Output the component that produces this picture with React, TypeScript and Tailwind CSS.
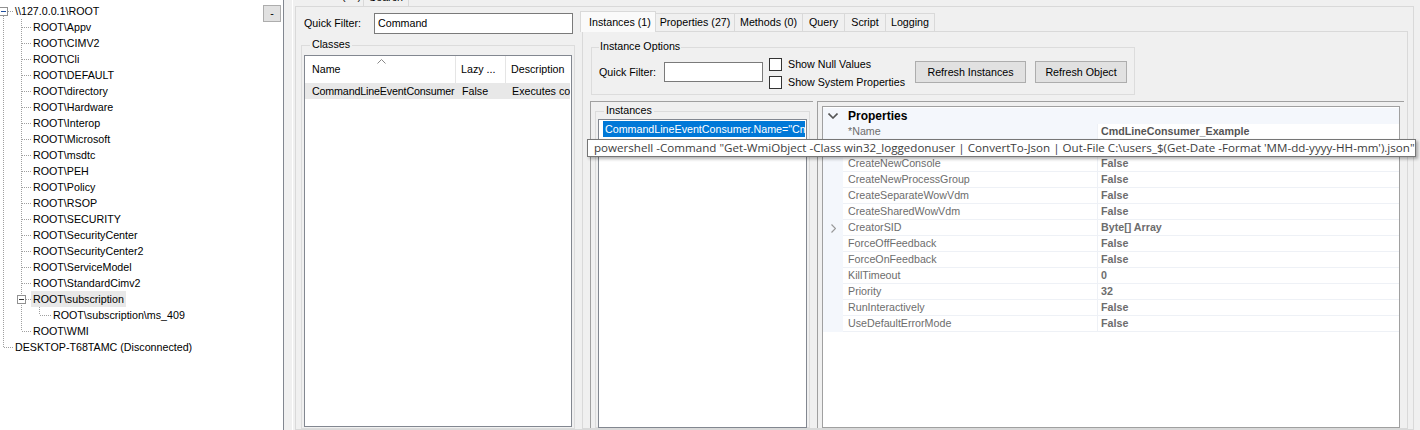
import React from 'react';

const treeRows: { text: string; x: number; selected?: boolean }[] = [
  { text: '\\\\127.0.0.1\\ROOT', x: 15 },
  { text: 'ROOT\\Appv', x: 33 },
  { text: 'ROOT\\CIMV2', x: 33 },
  { text: 'ROOT\\Cli', x: 33 },
  { text: 'ROOT\\DEFAULT', x: 33 },
  { text: 'ROOT\\directory', x: 33 },
  { text: 'ROOT\\Hardware', x: 33 },
  { text: 'ROOT\\Interop', x: 33 },
  { text: 'ROOT\\Microsoft', x: 33 },
  { text: 'ROOT\\msdtc', x: 33 },
  { text: 'ROOT\\PEH', x: 33 },
  { text: 'ROOT\\Policy', x: 33 },
  { text: 'ROOT\\RSOP', x: 33 },
  { text: 'ROOT\\SECURITY', x: 33 },
  { text: 'ROOT\\SecurityCenter', x: 33 },
  { text: 'ROOT\\SecurityCenter2', x: 33 },
  { text: 'ROOT\\ServiceModel', x: 33 },
  { text: 'ROOT\\StandardCimv2', x: 33 },
  { text: 'ROOT\\subscription', x: 33, selected: true },
  { text: 'ROOT\\subscription\\ms_409', x: 53 },
  { text: 'ROOT\\WMI', x: 33 },
  { text: 'DESKTOP-T68TAMC (Disconnected)', x: 15 },
];

const command =
  'powershell -Command "Get-WmiObject -Class win32_loggedonuser | ConvertTo-Json | Out-File C:\\users_$(Get-Date -Format \'MM-dd-yyyy-HH-mm\').json"';

const props: { name: string; value: string; expand?: boolean }[] = [
  { name: '*Name', value: 'CmdLineConsumer_Example' },
  { name: 'CommandLineTemplate', value: command },
  { name: 'CreateNewConsole', value: 'False' },
  { name: 'CreateNewProcessGroup', value: 'False' },
  { name: 'CreateSeparateWowVdm', value: 'False' },
  { name: 'CreateSharedWowVdm', value: 'False' },
  { name: 'CreatorSID', value: 'Byte[] Array', expand: true },
  { name: 'ForceOffFeedback', value: 'False' },
  { name: 'ForceOnFeedback', value: 'False' },
  { name: 'KillTimeout', value: '0' },
  { name: 'Priority', value: '32' },
  { name: 'RunInteractively', value: 'False' },
  { name: 'UseDefaultErrorMode', value: 'False' },
];

function TreeLines() {
  const dot = { stroke: '#a0a0a0', strokeDasharray: '1 1', shapeRendering: 'crispEdges' as const };
  const level1 = [27, 43, 59, 75, 91, 107, 123, 139, 155, 171, 187, 203, 219, 235, 251, 267, 283, 331];
  return (
    <svg className="absolute left-0 top-0 pointer-events-none" width="60" height="360">
      <line x1="3.5" y1="16" x2="3.5" y2="347" {...dot} />
      <line x1="4" y1="347.5" x2="13" y2="347.5" {...dot} />
      <line x1="8" y1="11.5" x2="13" y2="11.5" {...dot} />
      <line x1="21.5" y1="19" x2="21.5" y2="331" {...dot} />
      {level1.map((y) => (
        <line key={y} x1="22" y1={y + 0.5} x2="31" y2={y + 0.5} {...dot} />
      ))}
      <line x1="26" y1="299.5" x2="31" y2="299.5" {...dot} />
      <line x1="39.5" y1="307" x2="39.5" y2="315" {...dot} />
      <line x1="40" y1="315.5" x2="51" y2="315.5" {...dot} />
      <rect x="-0.5" y="7.5" width="8" height="8" fill="#fff" stroke="#919191" shapeRendering="crispEdges" />
      <line x1="1" y1="11.5" x2="6" y2="11.5" stroke="#1f4f9f" shapeRendering="crispEdges" />
      <rect x="17.5" y="295.5" width="8" height="8" fill="#fff" stroke="#919191" shapeRendering="crispEdges" />
      <line x1="19" y1="299.5" x2="24" y2="299.5" stroke="#333" shapeRendering="crispEdges" />
    </svg>
  );
}

function Checkbox({ label }: { label: string }) {
  return (
    <div className="flex items-center h-[18px]">
      <div className="w-[13px] h-[13px] bg-white border border-[#333] shrink-0" />
      <span className="ml-[6px]">{label}</span>
    </div>
  );
}

function WinButton({ label, w }: { label: string; w: string }) {
  return (
    <div className={`${w} h-[22px] bg-[#e1e1e1] border border-[#adadad] flex items-center justify-center shrink-0`}>
      {label}
    </div>
  );
}

export default function App() {
  return (
    <div className="relative w-[1420px] h-[430px] overflow-hidden bg-[#f0f0f0] flex font-['Liberation_Sans',Arial,sans-serif] text-[10.7px] text-black leading-none whitespace-nowrap">
      {/* namespace tree */}
      <div className="relative w-[284px] h-full bg-white border-r border-[#828790] shrink-0">
        <TreeLines />
        <div className="pt-[3px]">
          {treeRows.map((r) => (
            <div key={r.text} className="h-[16px] flex items-center" style={{ paddingLeft: r.selected ? r.x - 2 : r.x }}>
              <span className={r.selected ? 'bg-[#e8e8e8] px-[2px] h-[16px] flex items-center' : ''}>{r.text}</span>
            </div>
          ))}
        </div>
        <div className="absolute right-[2px] top-[5px] w-[18px] h-[17px] bg-[#e1e1e1] border border-[#adadad] flex items-center justify-center">
          -
        </div>
      </div>

      {/* splitter */}
      <div className="w-[9px] shrink-0 border-r border-white" />

      {/* main area */}
      <div className="flex-1 flex flex-col min-w-0 pl-[2px] pr-[6px]">
        <div className="h-[6px] overflow-hidden shrink-0 flex items-end">
          <div className="flex items-end">
            <div className="w-[68px] h-[20px] pl-[6px] flex items-center">Classes (58)</div>
            <div className="w-[46px] h-[18px] border-l border-r border-[#d9d9d9] flex items-center justify-center">
              Search
            </div>
          </div>
        </div>

        <div className="flex-1 border border-[#d9d9d9] flex min-h-0">
          {/* classes column */}
          <div className="w-[284px] shrink-0 flex flex-col pl-[5px] pr-[7px] pt-[6px]">
            <div className="flex items-center h-[21px]">
              <span className="ml-[3px] w-[70px] shrink-0">Quick Filter:</span>
              <div className="flex-1 h-[21px] bg-white border border-[#7a7a7a] flex items-center pl-[3px]">Command</div>
            </div>
            <fieldset className="flex-1 border border-[#dcdcdc] mt-[5px] px-[2px] pb-[4px] min-h-0">
              <legend className="ml-[6px] px-[2px] h-[13px]">Classes</legend>
              <div className="h-full bg-white border border-[#828790] flex flex-col mt-[3px]">
                <div className="h-[27px] flex items-center relative shrink-0">
                  <div className="w-[151px] h-full flex items-center pl-[7px] border-r border-[#e5e5e5]">Name</div>
                  <div className="w-[50px] h-full flex items-center pl-[5px] border-r border-[#e5e5e5]">Lazy ...</div>
                  <div className="flex-1 h-full flex items-center pl-[5px] overflow-hidden">Description</div>
                  <svg className="absolute left-[72px] top-[3px]" width="9" height="5">
                    <polyline points="0.5,4.5 4.5,0.5 8.5,4.5" fill="none" stroke="#888" />
                  </svg>
                </div>
                <div className="h-[16px] flex items-center bg-[#e8e8e8] mr-[1px] overflow-hidden">
                  <div className="w-[151px] shrink-0 pl-[7px] tracking-[-0.15px]">CommandLineEventConsumer</div>
                  <div className="w-[50px] shrink-0 pl-[6px]">False</div>
                  <div className="flex-1 pl-[6px] overflow-hidden">Executes co</div>
                </div>
              </div>
            </fieldset>
          </div>

          {/* instances tab control */}
          <div className="flex-1 flex flex-col pt-[4px] pr-[5px] min-w-0">
            <div className="flex items-end h-[20px] shrink-0 relative z-10">
              <div className="w-[76px] h-[21px] bg-[#fafafa] border border-b-0 border-[#d9d9d9] flex items-center pl-[8px] -mb-[1px]">
                Instances (1)
              </div>
              <div className="w-[79px] h-[18px] border-t border-r border-[#d9d9d9] flex items-center justify-center">Properties (27)</div>
              <div className="w-[68px] h-[18px] border-t border-r border-[#d9d9d9] flex items-center justify-center">Methods (0)</div>
              <div className="w-[42px] h-[18px] border-t border-r border-[#d9d9d9] flex items-center justify-center">Query</div>
              <div className="w-[41px] h-[18px] border-t border-r border-[#d9d9d9] flex items-center justify-center">Script</div>
              <div className="w-[49px] h-[18px] border-t border-r border-[#d9d9d9] flex items-center justify-center">Logging</div>
            </div>
            <div className="flex-1 ml-[2px] border border-[#d9d9d9] flex flex-col pl-[8px] pr-[3px] pt-[9px] min-h-0">
              <fieldset className="w-[542px] h-[54px] border border-[#dcdcdc] px-[7px] shrink-0">
                <legend className="px-[1px] h-[13px]">Instance Options</legend>
                <div className="flex items-start">
                  <span className="mt-[13px] shrink-0">Quick Filter:</span>
                  <div className="ml-[8px] mt-[8px] w-[99px] h-[20px] bg-white border border-[#7a7a7a] shrink-0" />
                  <div className="ml-[6px] mt-[1px] flex flex-col shrink-0">
                    <Checkbox label="Show Null Values" />
                    <Checkbox label="Show System Properties" />
                  </div>
                  <div className="ml-[10px] mt-[7px] flex gap-[9px] shrink-0">
                    <WinButton label="Refresh Instances" w="w-[111px]" />
                    <WinButton label="Refresh Object" w="w-[92px]" />
                  </div>
                </div>
              </fieldset>

              <div className="flex-1 flex gap-[4px] mt-[6px] -ml-[1px] min-h-0">
                {/* instances list */}
                <div className="w-[223px] shrink-0 border-t border-l border-[#a0a0a0] pl-[4px] pr-[3px] flex flex-col">
                  <fieldset className="flex-1 border border-[#dcdcdc] px-[2px] mt-[3px] min-w-0">
                    <legend className="ml-[6px] px-[2px] h-[13px]">Instances</legend>
                    <div className="h-full bg-white border border-[#828790] pl-[4px] pr-[1px] pt-[1px] mt-[1px] overflow-hidden">
                      <div className="h-[16px] bg-[#0078d7] text-white flex items-center pl-[2px] overflow-hidden">
                        CommandLineEventConsumer.Name="CmdLineConsumer_Example"
                      </div>
                    </div>
                  </fieldset>
                </div>

                {/* property grid */}
                <div className="flex-1 border-t border-l border-[#a0a0a0] pl-[4px] pt-[4px] pr-[4px] min-w-0">
                  <div className="h-full bg-white border border-[#a0a0a0] pt-[1px]">
                    <div className="h-[16px] bg-[#f4f7fc] flex items-center">
                      <div className="w-[20px] flex justify-center">
                        <svg width="10" height="6">
                          <polyline points="0.5,0.5 5,5 9.5,0.5" fill="none" stroke="#555" strokeWidth="1.6" />
                        </svg>
                      </div>
                      <span className="ml-[5px] font-bold text-[12px]">Properties</span>
                    </div>
                    {props.map((p, i) => (
                      <div key={p.name} className="h-[16px] flex">
                        <div className="w-[20px] bg-[#f4f7fc] flex items-center justify-center">
                          {p.expand && (
                            <svg width="5" height="9">
                              <polyline points="0.5,0.5 4.5,4.5 0.5,8.5" fill="none" stroke="#999" strokeWidth="1.2" />
                            </svg>
                          )}
                        </div>
                        <div
                          className={`w-[254px] flex items-center pl-[5px] text-[#6d6d6d] border-b border-[#eef1f6] overflow-hidden ${
                            i === 0 ? 'bg-[#f4f7fc]' : 'bg-white'
                          }`}
                        >
                          {p.name}
                        </div>
                        <div
                          className={`flex-1 flex items-center pl-[3px] border-l border-b border-[#eef1f6] font-bold overflow-hidden ${
                            i === 0 ? 'text-[#555]' : 'text-[#6d6d6d]'
                          }`}
                        >
                          {p.value}
                        </div>
                      </div>
                    ))}
                  </div>
                </div>
              </div>
            </div>
          </div>
        </div>
      </div>

      {/* tooltip over CommandLineTemplate value */}
      <div className="absolute left-[587px] top-[139px] w-[829px] h-[18px] bg-white border border-[#767676] shadow-[2px_2px_3px_rgba(0,0,0,0.3)] flex items-center pl-[6px] font-['Open_Sans',sans-serif] text-[11.6px] text-[#3c3c3c]">
        {command}
      </div>
    </div>
  );
}
